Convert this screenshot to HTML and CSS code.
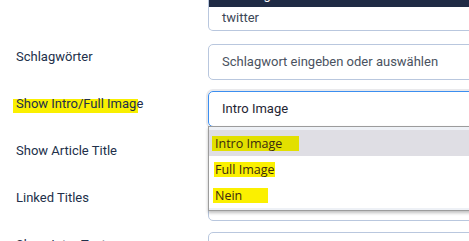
FILE: index.html
```html
<!DOCTYPE html>
<html lang="de">
<head>
<meta charset="utf-8">
<title>Form</title>
<link rel="stylesheet" href="styles.css">
</head>
<body>
<div class="page">
  <div class="top">
    <div class="menu">
      <div class="menu-item active">Hashtag</div>
      <div class="menu-item">twitter</div>
    </div>
  </div>
  <div class="form">
    <div class="label">Schlagwörter</div>
    <div class="input placeholder">Schlagwort eingeben oder auswählen</div>

    <div class="label"><span class="label-hl">Show Intro/Full Image</span></div>
    <div class="input select focus">Intro Image
      <div class="listbox">
        <div class="opt selected"><span class="hl hl-intro">Intro Image</span></div>
        <div class="opt"><span class="hl hl-full">Full Image</span></div>
        <div class="opt"><span class="hl hl-nein">Nein</span></div>
      </div>
    </div>

    <div class="label">Show Article Title</div>
    <div class="input"></div>

    <div class="label">Linked Titles</div>
    <div class="input"></div>

    <div class="label">Show Intro Text</div>
    <div class="input"></div>
  </div>
</div>
</body>
</html>
```
FILE: styles.css
```css
html, body {
  margin: 0;
  height: 100%;
  overflow: hidden;
  background: #ffffff;
}
body {
  font-family: Roboto, "Liberation Sans", sans-serif;
  font-size: 13px;
  color: #22304a;
}
.page {
  width: 520px;
}
.top {
  margin: -17px 0 13px 208px;
  width: 312px;
}
.menu {
  border: 1px solid #b9c7de;
  border-top: 0;
  border-radius: 0 0 5px 5px;
  overflow: hidden;
}
.menu-item {
  height: 23px;
  line-height: 22px;
  padding-left: 13px;
  color: #3d4757;
}
.menu-item.active {
  height: 24px;
  line-height: 24px;
  background: #1f2b45;
  color: #ffffff;
}
.form {
  display: grid;
  grid-template-columns: 208px 312px;
  grid-auto-rows: 36px;
  row-gap: 11px;
}
.label {
  padding: 3px 0 0 16px;
  line-height: 20px;
  color: #22304a;
}
.label-hl {
  display: inline-block;
  margin-left: -3px;
  padding-left: 3px;
  background: linear-gradient(90deg, #fbf000, #f8ef00) no-repeat;
  background-size: calc(100% - 5px) 14px;
  background-position: 0 5px;
}
.input {
  box-sizing: border-box;
  border: 1px solid #b9c7de;
  border-radius: 5px;
  padding: 0 13px;
  line-height: 34px;
  color: #1f2533;
}
.input.placeholder {
  color: #4a5260;
}
.select.focus {
  position: relative;
  z-index: 2;
  border-color: #3b8ef0;
  box-shadow: 0 0 0 2px #e9e9ec;
}
.listbox {
  position: absolute;
  left: -1px;
  right: -1px;
  top: 34px;
  border: 1px solid #9c9c9c;
  background: #eef1f6;
  padding: 3px 0 2px;
  box-shadow: 0 2px 3px rgba(0, 0, 0, 0.25);
  font-family: "Open Sans", "Noto Sans", sans-serif;
  font-size: 12.5px;
  color: #1e1e1e;
}
.opt {
  height: 26px;
  line-height: 26px;
  padding-left: 6px;
  background: #ffffff;
}
.opt.selected {
  background: #dfdee4;
}
.hl {
  display: inline-block;
  line-height: 15px;
  vertical-align: middle;
  color: #3a2a10;
}
.hl-intro {
  margin-left: -3px;
  padding: 0 17px 0 3px;
  background: #e2e000;
}
.hl-full {
  margin-left: -1px;
  padding: 0 0 0 1px;
  background: #fbf000;
}
.hl-nein {
  margin-left: -2px;
  padding: 0 26px 0 2px;
  background: #fbf000;
}
```
